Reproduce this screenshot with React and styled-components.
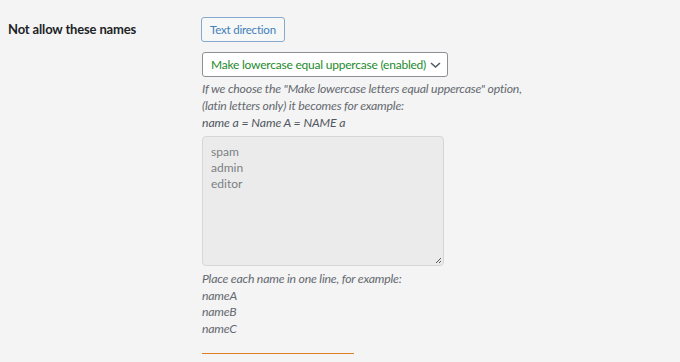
import React from "react";
import styled, { createGlobalStyle } from "styled-components";

const Global = createGlobalStyle`
  html, body { margin: 0; padding: 0; background: #f4f4f4; }
  body { font-family: Lato, "Noto Sans", sans-serif; color: #1d2327; }
`;

const Row = styled.div`
  display: grid;
  grid-template-columns: 202px 1fr;
  padding-top: 17px;
`;

const Label = styled.div`
  padding-left: 8px;
  font-weight: 700;
  font-size: 13px;
  letter-spacing: -0.15px;
  line-height: 24px;
`;

const Field = styled.div`
  display: flex;
  flex-direction: column;
  align-items: flex-start;
`;

const Button = styled.button`
  height: 25px;
  padding: 0 8px;
  margin-left: -1px;
  font-family: inherit;
  font-size: 11.5px;
  letter-spacing: -0.2px;
  color: #3f80ba;
  background: #f6f7f7;
  border: 1px solid #86a9cc;
  border-radius: 3px;
  line-height: 23px;
`;

const SelectBox = styled.div`
  margin-top: 10px;
  width: 246px;
  height: 25px;
  box-sizing: border-box;
  display: flex;
  align-items: center;
  justify-content: space-between;
  padding: 0 6px 0 8px;
  background: #fff;
  border: 1px solid #8c8f94;
  border-radius: 3px;
  font-size: 12px;
  letter-spacing: -0.22px;
  color: #1e8a2e;
  white-space: nowrap;
`;

const Chevron = styled.svg`
  flex: none;
  margin-right: 0;
`;

const Desc = styled.p`
  margin: ${(p) => p.$mt || 0}px 0 0;
  font-size: 12.25px;
  letter-spacing: -0.2px;
  font-style: italic;
  line-height: 16.5px;
  color: #646970;
`;

const Example = styled.p`
  margin: 0;
  font-size: 12.25px;
  letter-spacing: -0.1px;
  font-style: italic;
  line-height: 17px;
  color: #50575e;
`;

const TextArea = styled.div`
  margin-top: 5px;
  width: 242px;
  height: 130px;
  box-sizing: border-box;
  position: relative;
  background: #ebebeb;
  border: 1px solid #d6d6d8;
  border-radius: 4px;
  padding: 7px 8px;
  font-size: 12px;
  line-height: 16px;
  color: #7b7f84;
`;

const Grip = styled.svg`
  position: absolute;
  right: 1px;
  bottom: 1px;
`;

const Divider = styled.div`
  margin-top: 16px;
  width: 152px;
  height: 1px;
  background: #e07e24;
  box-shadow: 0 1px 0 #f3d6b8;
`;

export default function App() {
  return (
    <>
      <Global />
      <Row>
        <Label>Not allow these names</Label>
        <Field>
          <Button>Text direction</Button>
          <SelectBox>
            <span>Make lowercase equal uppercase (enabled)</span>
            <Chevron width="11" height="6" viewBox="0 0 11 6">
              <path d="M1 1l4.5 4L10 1" fill="none" stroke="#50575e" strokeWidth="1.5" />
            </Chevron>
          </SelectBox>
          <Desc $mt={4}>
            If we choose the "Make lowercase letters equal uppercase" option,
            <br />
            (latin letters only) it becomes for example:
          </Desc>
          <Example>name a = Name A = NAME a</Example>
          <TextArea>
            spam
            <br />
            admin
            <br />
            editor
            <Grip width="8" height="8" viewBox="0 0 8 8">
              <path d="M7 2L2 7M7 5L5 7" stroke="#555" strokeWidth="1" />
            </Grip>
          </TextArea>
          <Desc $mt={5}>
            Place each name in one line, for example:
            <br />
            nameA
            <br />
            nameB
            <br />
            nameC
          </Desc>
          <Divider />
        </Field>
      </Row>
    </>
  );
}
